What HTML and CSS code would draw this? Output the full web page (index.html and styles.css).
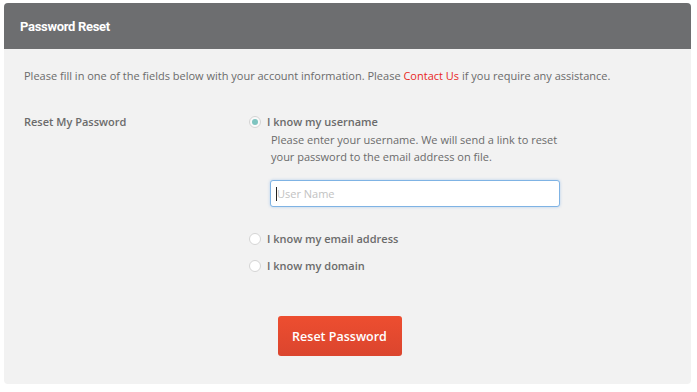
FILE: index.html
```html
<!DOCTYPE html>
<html lang="en">
<head>
    <meta charset="UTF-8">
    <title>Password Reset</title>
    <link rel="stylesheet" href="styles.css">
</head>
<body>
    <div class="panel">
        <div class="panel-header">Password Reset</div>
        <div class="panel-body">
            <p class="intro">Please fill in one of the fields below with your account information. Please <a href="#">Contact Us</a> if you require any assistance.</p>

            <div class="form-row">
                <div class="form-label">Reset My Password</div>
                <div class="options">
                    <div class="option">
                        <span class="radio checked"></span>
                        <span class="option-label">I know my username</span>
                    </div>
                    <div class="option-detail">
                        <p class="help">Please enter your username. We will send a link to reset your password to the email address on file.</p>
                        <div class="input"><span class="caret"></span><span class="placeholder">User Name</span></div>
                    </div>
                    <div class="option">
                        <span class="radio"></span>
                        <span class="option-label">I know my email address</span>
                    </div>
                    <div class="option">
                        <span class="radio"></span>
                        <span class="option-label">I know my domain</span>
                    </div>
                </div>
            </div>

            <div class="actions">
                <button class="btn-reset">Reset Password</button>
            </div>
        </div>
    </div>
</body>
</html>
```

FILE: styles.css
```css
body {
    margin: 0;
    padding: 3px 6px 7px 4px;
    background: #fff;
    font-family: 'Open Sans', sans-serif;
    color: #6b6b6b;
}

.panel {
    border-radius: 4px;
    overflow: hidden;
    background: #f2f2f2;
}

.panel-header {
    height: 46px;
    display: flex;
    align-items: center;
    padding-left: 16px;
    background: #6d6e70;
    color: #fff;
    font-family: 'Roboto', sans-serif;
    font-weight: bold;
    font-size: 13px;
    letter-spacing: -0.3px;
}

.panel-body {
    padding: 18px 20px 28px 20px;
}

.intro {
    margin: 0;
    font-size: 11px;
    line-height: 17px;
}

.intro a {
    color: #e8281e;
    text-decoration: none;
}

.form-row {
    display: grid;
    grid-template-columns: 225px 1fr;
    margin-top: 27px;
}

.form-label {
    font-size: 11px;
    font-weight: 600;
    line-height: 17px;
    padding-top: 2px;
}

.option {
    display: flex;
    align-items: center;
    gap: 6px;
    height: 21px;
}

.option + .option {
    margin-top: 6px;
}

.option-label {
    font-size: 11px;
    font-weight: 600;
}

.radio {
    width: 12px;
    height: 12px;
    border-radius: 50%;
    background: #fff;
    border: 1px solid #d4d4d4;
    box-sizing: border-box;
    position: relative;
}

.radio.checked {
    background: #fafafa;
}

.radio.checked::after {
    content: '';
    position: absolute;
    top: 2px;
    left: 2px;
    width: 6px;
    height: 6px;
    border-radius: 50%;
    background: #7ec4c0;
}

.option-detail {
    padding-left: 21px;
    margin-bottom: 21px;
}

.help {
    margin: -1px 0 0 1px;
    width: 295px;
    font-size: 11px;
    line-height: 17px;
}

.input {
    margin-top: 15px;
    width: 290px;
    height: 27px;
    box-sizing: border-box;
    background: #fff;
    border: 1px solid #7fb3e4;
    border-radius: 3px;
    box-shadow: 0 0 3px rgba(100, 160, 230, 0.45);
    display: flex;
    align-items: center;
    padding-left: 5px;
}

.caret {
    width: 1px;
    height: 14px;
    background: #222;
}

.placeholder {
    font-size: 11px;
    color: #c2c2c2;
}

.actions {
    display: flex;
    justify-content: center;
    margin-top: 40px;
}

.btn-reset {
    width: 124px;
    height: 40px;
    border: none;
    border-radius: 3px;
    background: linear-gradient(#ed4e30, #db452e);
    color: #fff;
    font-family: 'Open Sans', sans-serif;
    font-weight: 600;
    font-size: 12.5px;
    margin-right: 16px;
}
```
